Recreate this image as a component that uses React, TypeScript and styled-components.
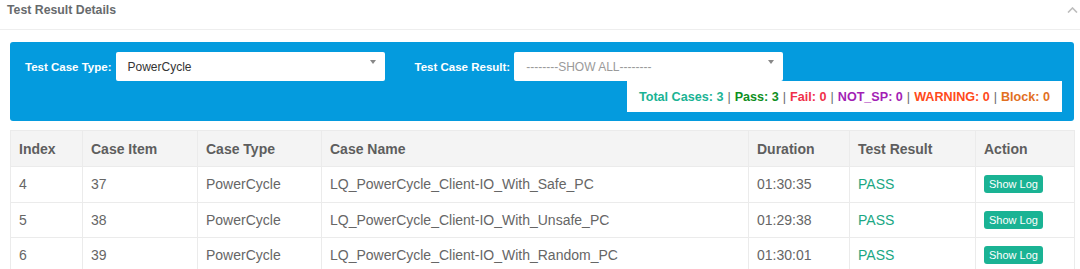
import React from "react";
import styled, { createGlobalStyle } from "styled-components";

const GlobalStyle = createGlobalStyle`
  html, body { margin: 0; padding: 0; background: #ffffff; }
  body { font-family: "Liberation Sans", Arial, sans-serif; color: #676a6c; }
`;

const Page = styled.div`
  width: 1080px;
`;

const TitleBar = styled.div`
  display: flex;
  justify-content: space-between;
  align-items: flex-start;
  height: 30px;
  border-bottom: 1px solid #eeeeee;
  padding: 0 2px 0 7px;
  box-sizing: border-box;
`;

const Title = styled.h5`
  margin: 0;
  font-size: 12.3px;
  line-height: 20px;
  font-weight: 700;
  color: #676a6c;
`;

const Collapse = styled.span`
  display: flex;
  margin-top: 7px;
`;

const Content = styled.div`
  padding: 12px 6px 0 10px;
`;

const FilterPanel = styled.div`
  background: #049bde;
  border-radius: 3px;
  padding: 10px 12px 9px 15px;
`;

const FilterRow = styled.div`
  display: flex;
  align-items: center;
  gap: 30px;
`;

const Field = styled.div`
  display: flex;
  align-items: center;
  gap: 4px;
`;

const Label = styled.label`
  color: #ffffff;
  font-weight: 700;
  font-size: 11.5px;
`;

const Select = styled.div<{ $placeholder?: boolean }>`
  display: flex;
  align-items: center;
  box-sizing: border-box;
  width: 269px;
  height: 29px;
  background: #ffffff;
  border-radius: 2px;
  padding: 0 9px 0 12px;
  font-size: 12px;
  color: ${(p) => (p.$placeholder ? "#9a9a9a" : "#333333")};
`;

const SelectText = styled.span`
  flex: 1;
`;

const Caret = styled.span`
  align-self: flex-start;
  margin-top: 8px;
  width: 0;
  height: 0;
  border-left: 3px solid transparent;
  border-right: 3px solid transparent;
  border-top: 4px solid #888888;
`;

const SummaryRow = styled.div`
  display: flex;
  justify-content: flex-end;
`;

const SummaryBox = styled.div`
  display: flex;
  align-items: center;
  height: 31px;
  background: #ffffff;
  padding: 0 12px;
  font-size: 12.6px;
  font-weight: 700;
  white-space: pre;
`;

const Stat = styled.span<{ $color: string }>`
  color: ${(p) => p.$color};
`;

const Sep = styled.span`
  color: #676a6c;
  font-weight: 400;
  padding: 0 0.5px;
`;

const Table = styled.table`
  margin-top: 9px;
  width: 1064px;
  border-collapse: collapse;
  table-layout: fixed;
  font-size: 14px;
`;

const Th = styled.th`
  background: #f4f4f4;
  text-align: left;
  font-weight: 700;
  color: #5e5e5e;
  padding: 8px 8px 7px;
  line-height: 20px;
  border: 1px solid #ebebeb;
`;

const Td = styled.td<{ $pass?: boolean }>`
  padding: 7px 8px;
  line-height: 20.5px;
  border: 1px solid #ebebeb;
  color: ${(p) => (p.$pass ? "#1ba784" : "#666666")};
`;

const LogButton = styled.button`
  display: block;
  border: none;
  border-radius: 3px;
  background: #1ab394;
  color: #ffffff;
  font-family: "Liberation Sans", Arial, sans-serif;
  font-size: 11px;
  line-height: 16px;
  padding: 1px 5px;
  cursor: pointer;
`;

const columns = [
  { name: "Index", width: 72 },
  { name: "Case Item", width: 115 },
  { name: "Case Type", width: 124 },
  { name: "Case Name", width: 427 },
  { name: "Duration", width: 101 },
  { name: "Test Result", width: 126 },
  { name: "Action", width: 99 },
];

const rows = [
  { index: 4, item: 37, type: "PowerCycle", name: "LQ_PowerCycle_Client-IO_With_Safe_PC", duration: "01:30:35", result: "PASS" },
  { index: 5, item: 38, type: "PowerCycle", name: "LQ_PowerCycle_Client-IO_With_Unsafe_PC", duration: "01:29:38", result: "PASS" },
  { index: 6, item: 39, type: "PowerCycle", name: "LQ_PowerCycle_Client-IO_With_Random_PC", duration: "01:30:01", result: "PASS" },
];

const stats = [
  { label: "Total Cases: 3", color: "#1ab394" },
  { label: "Pass: 3", color: "#0d8f1e" },
  { label: "Fail: 0", color: "#f0304a" },
  { label: "NOT_SP: 0", color: "#a31fb5" },
  { label: "WARNING: 0", color: "#ff4a1a" },
  { label: "Block: 0", color: "#e2701f" },
];

export default function App() {
  return (
    <Page>
      <GlobalStyle />
      <TitleBar>
        <Title>Test Result Details</Title>
        <Collapse>
          <svg width="11" height="6" viewBox="0 0 11 6">
            <polyline points="1,5.5 5.5,1 10,5.5" fill="none" stroke="#bdbdbd" strokeWidth="1.6" />
          </svg>
        </Collapse>
      </TitleBar>
      <Content>
        <FilterPanel>
          <FilterRow>
            <Field>
              <Label>Test Case Type:</Label>
              <Select>
                <SelectText>PowerCycle</SelectText>
                <Caret />
              </Select>
            </Field>
            <Field>
              <Label>Test Case Result:</Label>
              <Select $placeholder>
                <SelectText>--------SHOW ALL--------</SelectText>
                <Caret />
              </Select>
            </Field>
          </FilterRow>
          <SummaryRow>
            <SummaryBox>
              {stats.map((s, i) => (
                <React.Fragment key={s.label}>
                  {i > 0 && <Sep> | </Sep>}
                  <Stat $color={s.color}>{s.label}</Stat>
                </React.Fragment>
              ))}
            </SummaryBox>
          </SummaryRow>
        </FilterPanel>
        <Table>
          <colgroup>
            {columns.map((c) => (
              <col key={c.name} style={{ width: c.width }} />
            ))}
          </colgroup>
          <thead>
            <tr>
              {columns.map((c) => (
                <Th key={c.name}>{c.name}</Th>
              ))}
            </tr>
          </thead>
          <tbody>
            {rows.map((r) => (
              <tr key={r.index}>
                <Td>{r.index}</Td>
                <Td>{r.item}</Td>
                <Td>{r.type}</Td>
                <Td>{r.name}</Td>
                <Td>{r.duration}</Td>
                <Td $pass>{r.result}</Td>
                <Td>
                  <LogButton>Show Log</LogButton>
                </Td>
              </tr>
            ))}
          </tbody>
        </Table>
      </Content>
    </Page>
  );
}
